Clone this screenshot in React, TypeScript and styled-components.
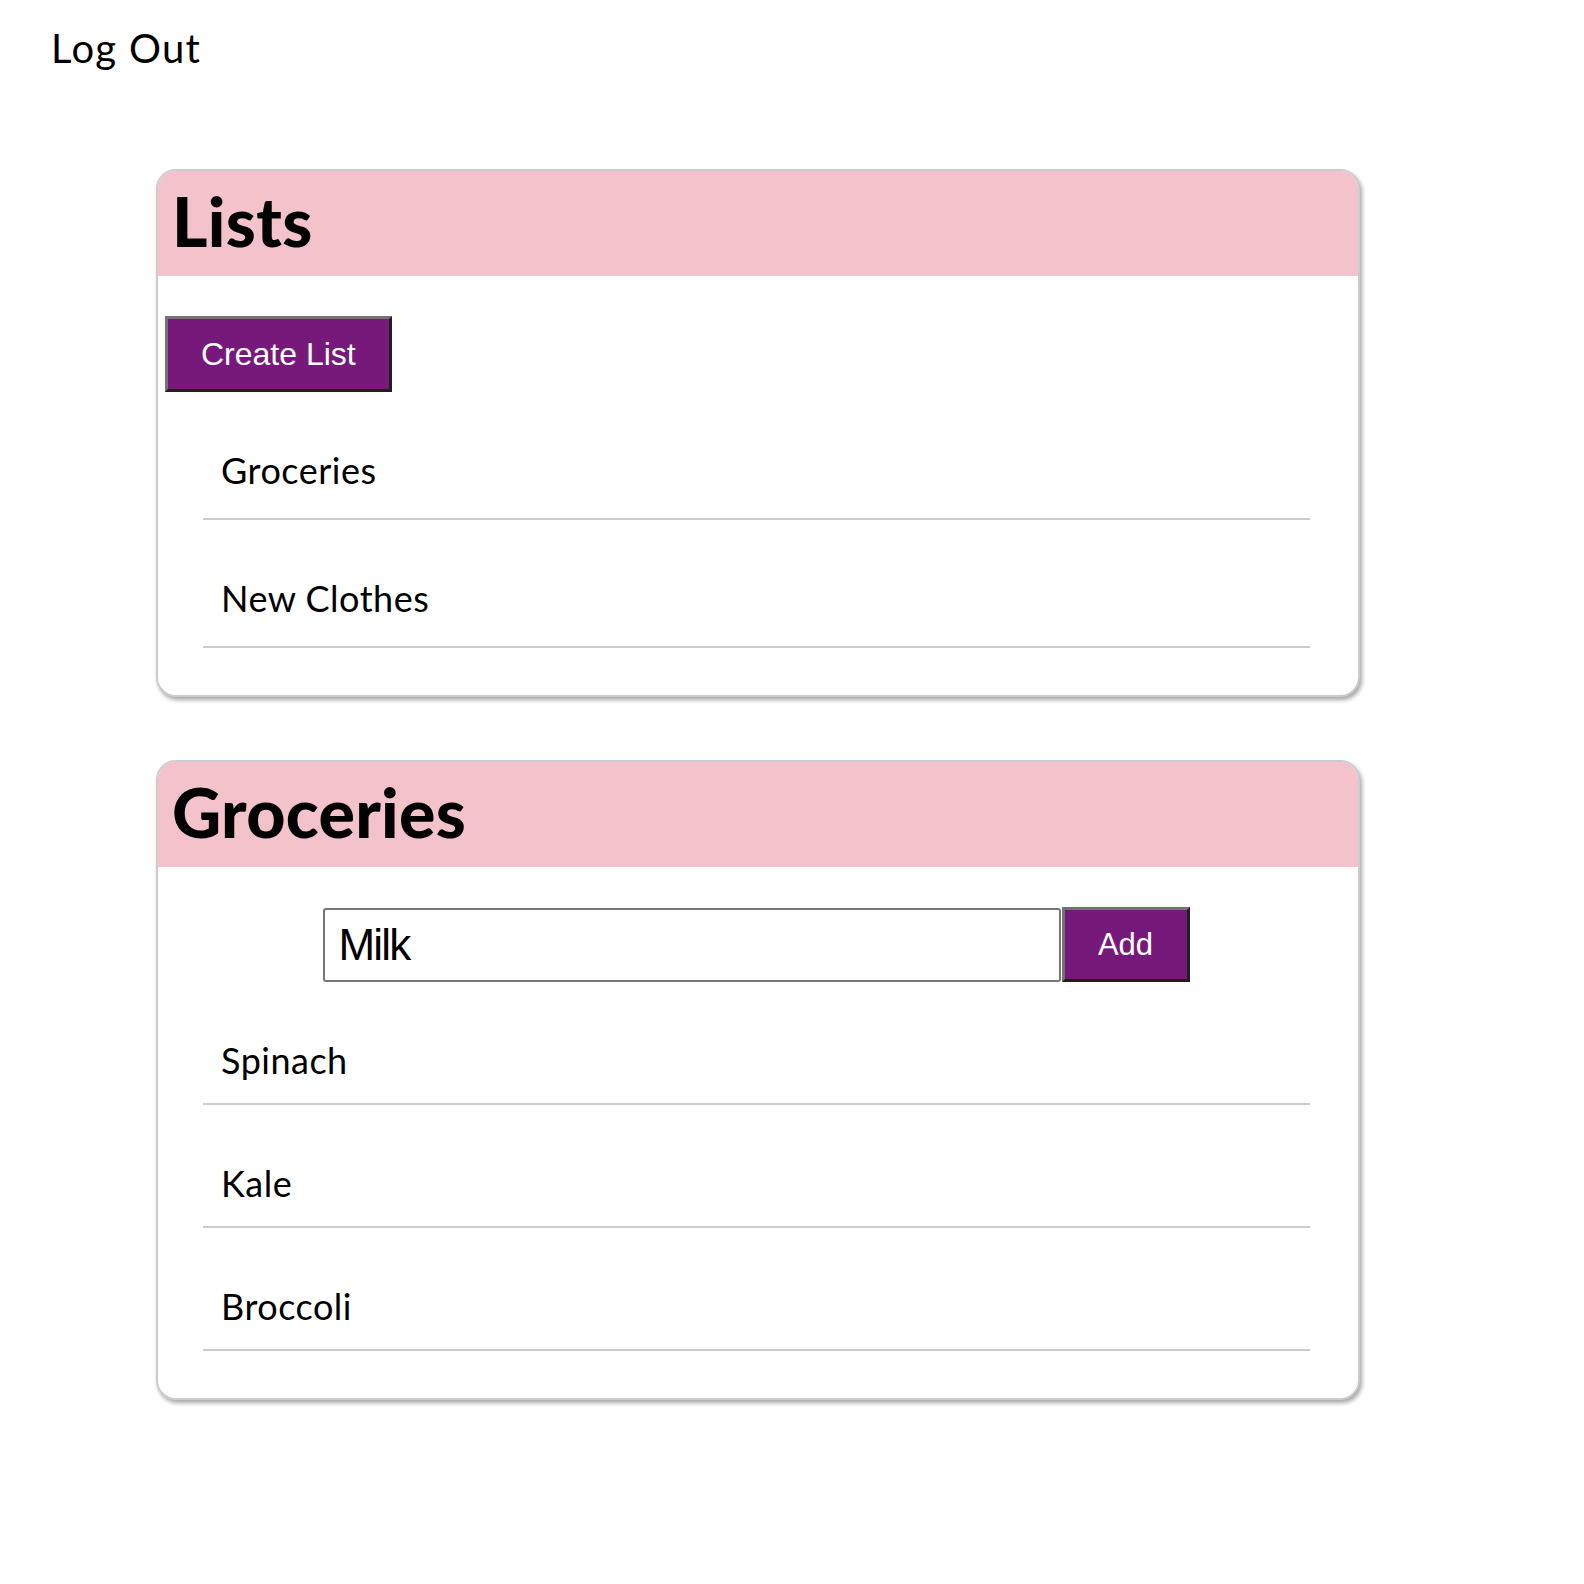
import React from "react";
import styled, { createGlobalStyle } from "styled-components";

const GlobalStyle = createGlobalStyle`
  html, body {
    margin: 0;
    padding: 0;
    background: #ffffff;
  }
  body {
    font-family: "Lato", "Open Sans", sans-serif;
    color: #000000;
  }
`;

const Page = styled.div`
  display: flex;
  flex-direction: column;
  padding-bottom: 120px;
`;

const TopBar = styled.nav`
  display: flex;
  padding: 24px 0 0 51px;
`;

const LogOutButton = styled.button`
  background: none;
  border: none;
  padding: 0;
  margin: 0;
  font-family: "Lato", "Open Sans", sans-serif;
  font-size: 40px;
  line-height: 48px;
  font-weight: 400;
  letter-spacing: 1.3px;
  color: #000;
  cursor: pointer;
`;

const Cards = styled.main`
  display: flex;
  flex-direction: column;
  gap: 63px;
  margin: 97px 0 0 156px;
  width: 1204px;
`;

const Card = styled.section`
  box-sizing: border-box;
  border: 2px solid #cccccc;
  border-radius: 20px;
  overflow: hidden;
  background: #ffffff;
  box-shadow: 2px 3px 4px rgba(0, 0, 0, 0.35);
`;

const CardHeader = styled.header`
  background: #f4c2cb;
  padding: 9px 14px 14px;
`;

const Title = styled.h1`
  margin: 0;
  font-family: "Lato", "Open Sans", sans-serif;
  font-weight: 900;
  font-size: 68px;
  line-height: 82px;
  letter-spacing: 0.3px;
`;

const CardBody = styled.div`
  display: flex;
  flex-direction: column;
  padding: 40px 7px 47px;
`;

const PurpleButton = styled.button`
  box-sizing: border-box;
  background: #77197b;
  color: #ffffff;
  font-family: "Liberation Sans", Arial, sans-serif;
  font-size: 32px;
  padding: 0 33px;
  border-width: 3px;
  border-style: solid;
  border-color: #737373 #1f1f1f #1f1f1f #737373;
  cursor: pointer;
`;

const CreateButton = styled(PurpleButton)`
  align-self: flex-start;
  height: 76px;
`;

const AddRow = styled.form`
  display: flex;
  justify-content: center;
  align-items: center;
  height: 75px;
  padding-right: 4px;
`;

const ItemInput = styled.input`
  box-sizing: border-box;
  width: 738px;
  height: 74px;
  border: 2px solid #767676;
  border-radius: 3px;
  padding: 0 14px;
  font-family: "Liberation Sans Narrow", "Arial Narrow", "Liberation Sans", Arial, sans-serif;
  font-size: 44px;
  letter-spacing: -1.8px;
  color: #000;
  outline: none;
`;

const AddButton = styled(PurpleButton)`
  width: 128px;
  height: 75px;
  padding: 0;
  margin-left: 1px;
  font-size: 31px;
`;

const ItemList = styled.ul`
  list-style: none;
  margin: 0 41px 0 38px;
  padding: 0;
`;

const Item = styled.li<{ $roomy?: boolean }>`
  padding: 56px 0 ${(p) => (p.$roomy ? "26px" : "21px")} 18px;
  border-bottom: 2px solid #cccccc;
  font-size: 36px;
  line-height: 44px;
  font-weight: 400;
  letter-spacing: 0.5px;
`;

const lists = ["Groceries", "New Clothes"];
const groceries = ["Spinach", "Kale", "Broccoli"];

export default function App() {
  return (
    <>
      <GlobalStyle />
      <Page>
        <TopBar>
          <LogOutButton type="button">Log Out</LogOutButton>
        </TopBar>
        <Cards>
          <Card>
            <CardHeader>
              <Title>Lists</Title>
            </CardHeader>
            <CardBody>
              <CreateButton type="button">Create List</CreateButton>
              <ItemList>
                {lists.map((l) => (
                  <Item key={l} $roomy>
                    {l}
                  </Item>
                ))}
              </ItemList>
            </CardBody>
          </Card>
          <Card>
            <CardHeader>
              <Title>Groceries</Title>
            </CardHeader>
            <CardBody>
              <AddRow onSubmit={(e) => e.preventDefault()}>
                <ItemInput defaultValue="Milk" />
                <AddButton type="submit">Add</AddButton>
              </AddRow>
              <ItemList>
                {groceries.map((g) => (
                  <Item key={g}>{g}</Item>
                ))}
              </ItemList>
            </CardBody>
          </Card>
        </Cards>
      </Page>
    </>
  );
}
